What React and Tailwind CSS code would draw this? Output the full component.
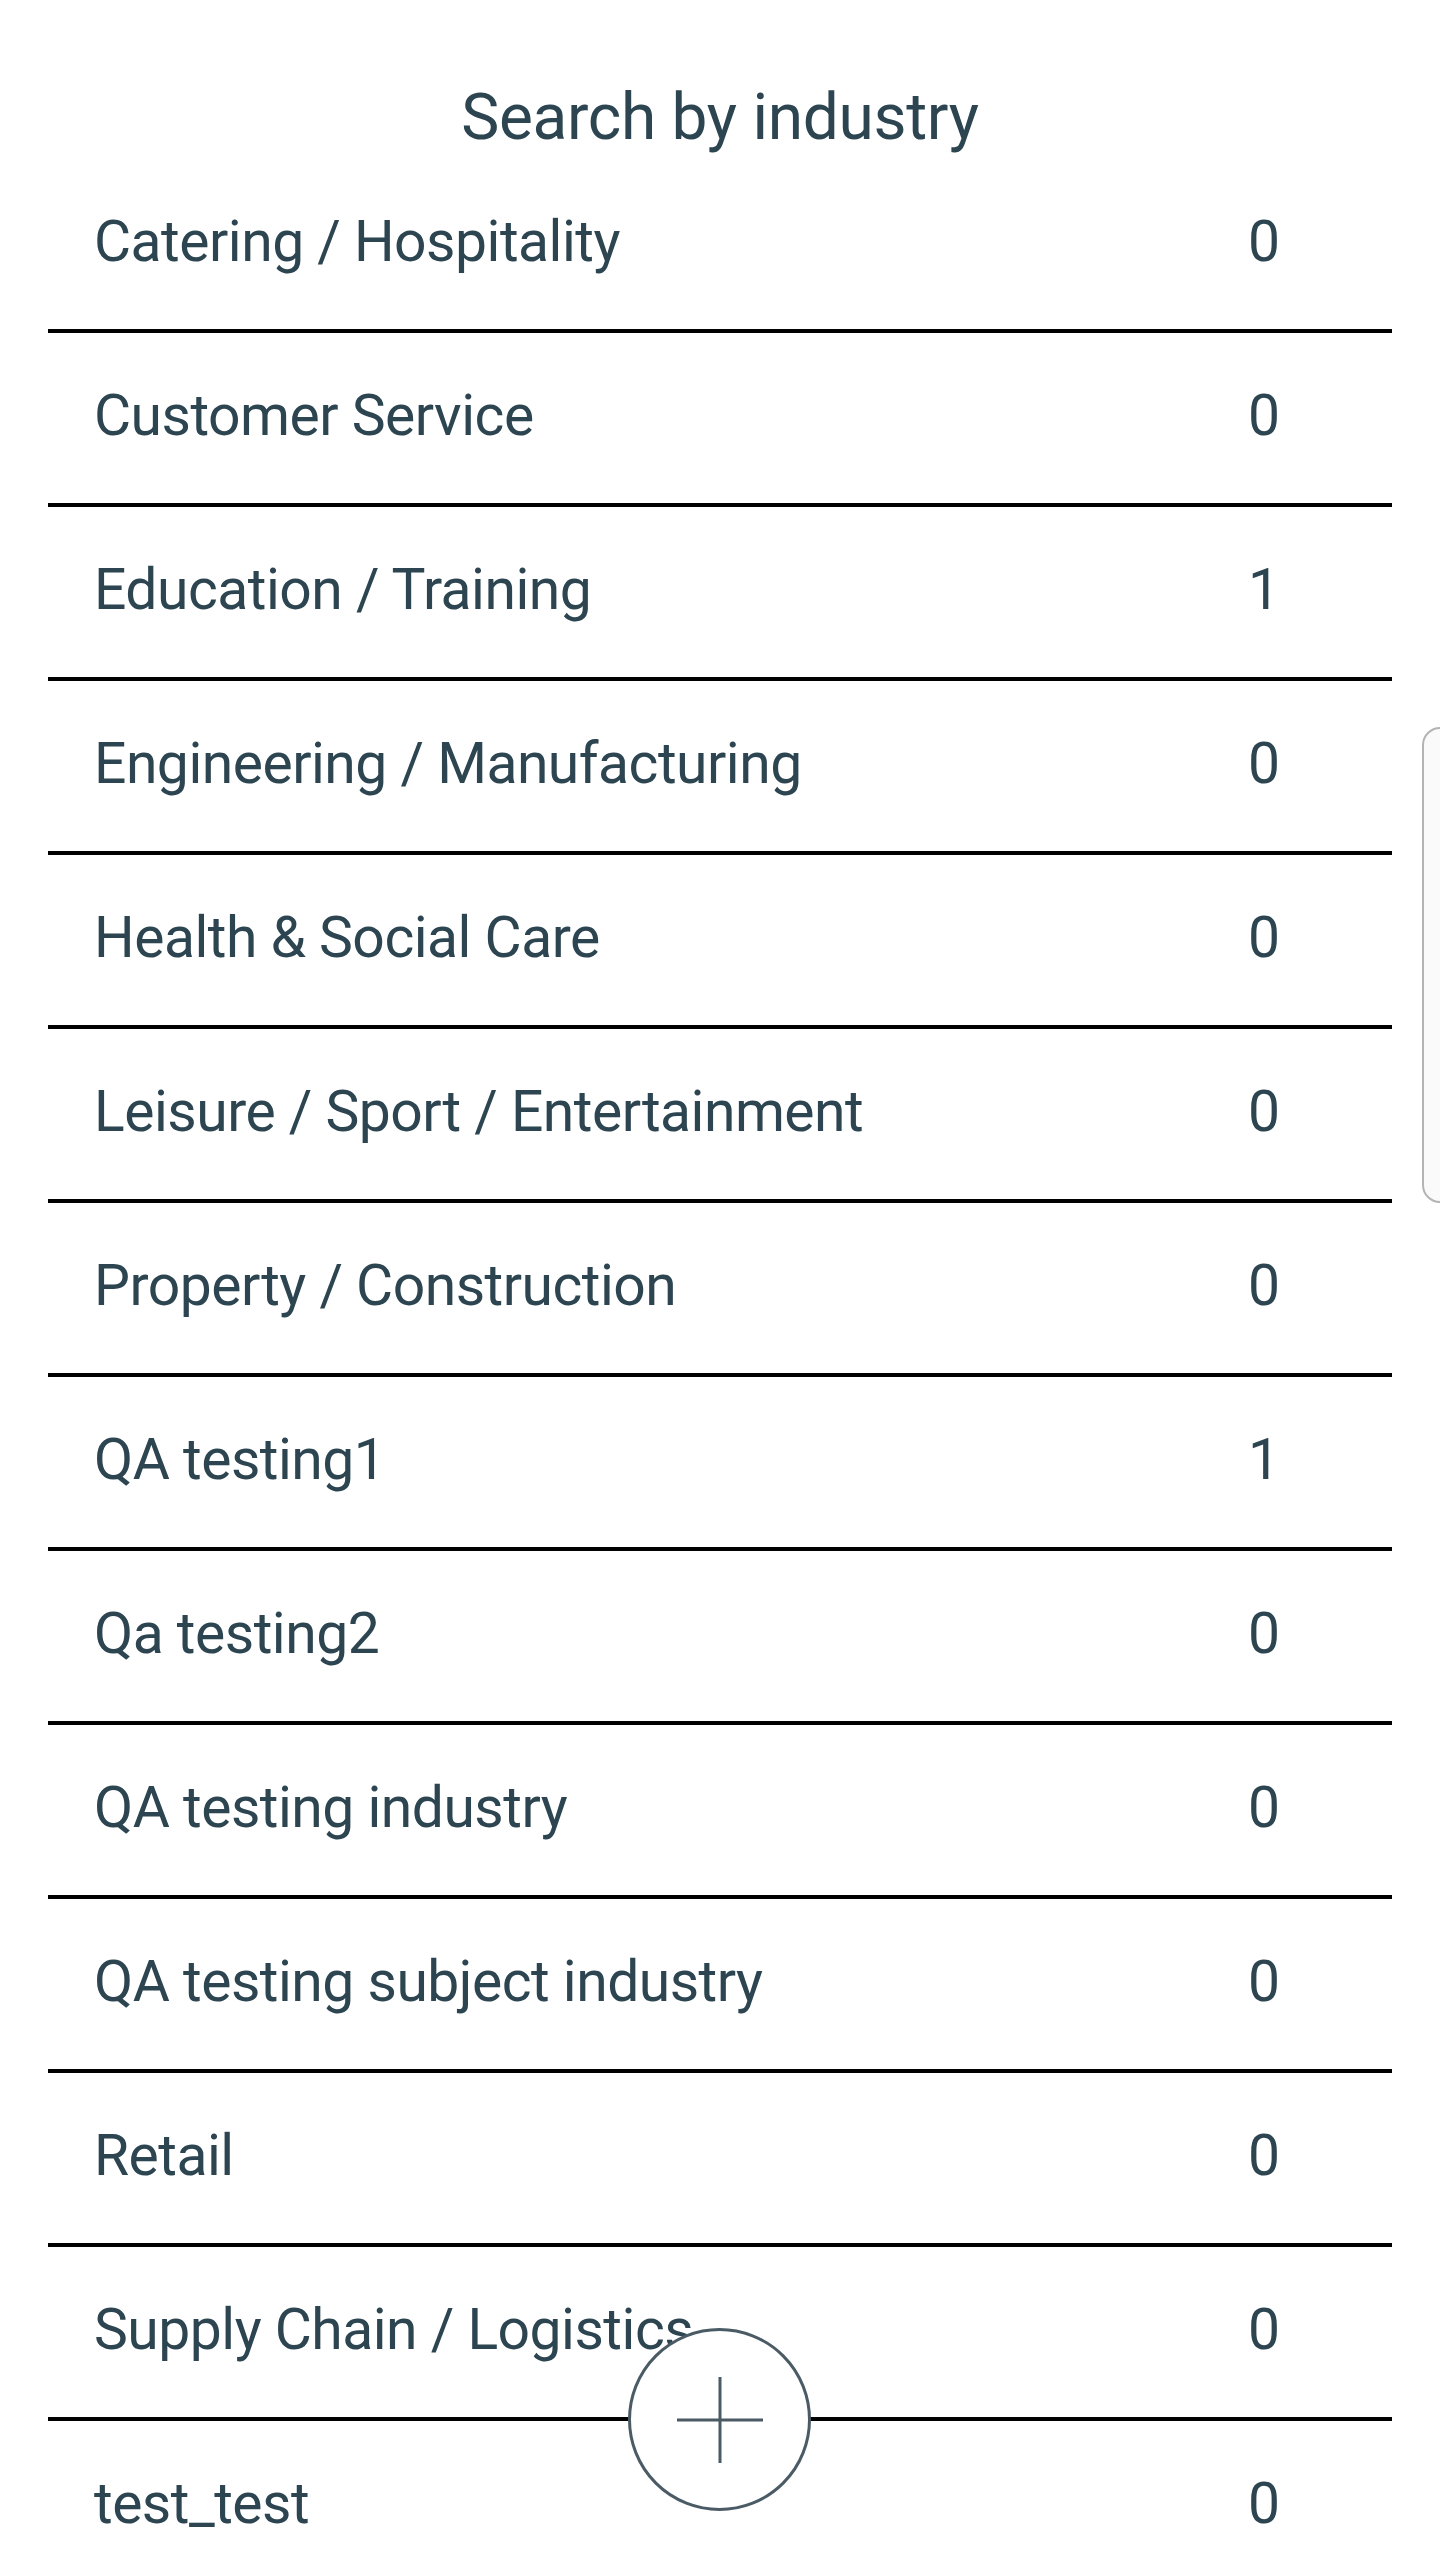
import React from "react";

const rows = [
  ["Catering / Hospitality", "0"],
  ["Customer Service", "0"],
  ["Education / Training", "1"],
  ["Engineering / Manufacturing", "0"],
  ["Health & Social Care", "0"],
  ["Leisure / Sport / Entertainment", "0"],
  ["Property / Construction", "0"],
  ["QA testing1", "1"],
  ["Qa testing2", "0"],
  ["QA testing industry", "0"],
  ["QA testing subject industry", "0"],
  ["Retail", "0"],
  ["Supply Chain / Logistics", "0"],
  ["test_test", "0"],
];

export default function App() {
  return (
    <div
      className="relative h-[2560px] w-[1440px] overflow-hidden bg-white text-[#2c4550]"
      style={{ fontFamily: "Roboto, 'Open Sans', sans-serif" }}
    >
      <div className="px-[48px]">
        <div className="h-[159px] pt-[86px] text-center">
          <h1 className="text-[64px] font-normal leading-none tracking-[-0.3px]">Search by industry</h1>
        </div>
        <div className="flex flex-col">
          {rows.map(([name, count]) => (
            <div
              key={name}
              className="flex h-[174px] shrink-0 items-center justify-between border-b-4 border-black pb-[5px] pl-[46px] pr-[112px]"
            >
              <span className="text-[57px] leading-none tracking-[-0.5px]">{name}</span>
              <span className="text-[57px] leading-none tabular-nums">{count}</span>
            </div>
          ))}
        </div>
      </div>

      {/* floating add button */}
      <button
        type="button"
        className="absolute left-[628px] top-[2328px] flex h-[183px] w-[183px] items-center justify-center rounded-full border-[3px] border-[#4a5b65] bg-white"
      >
        <svg width="90" height="90" viewBox="0 0 90 90">
          <path d="M45 2V88M2 45H88" stroke="#4a5b65" strokeWidth="3" fill="none" />
        </svg>
      </button>

      {/* edge panel handle */}
      <div className="absolute left-[1422px] top-[727px] h-[476px] w-[40px] rounded-l-[18px] border-2 border-[#b4b4b4] bg-[#fafafa]" />
    </div>
  );
}
